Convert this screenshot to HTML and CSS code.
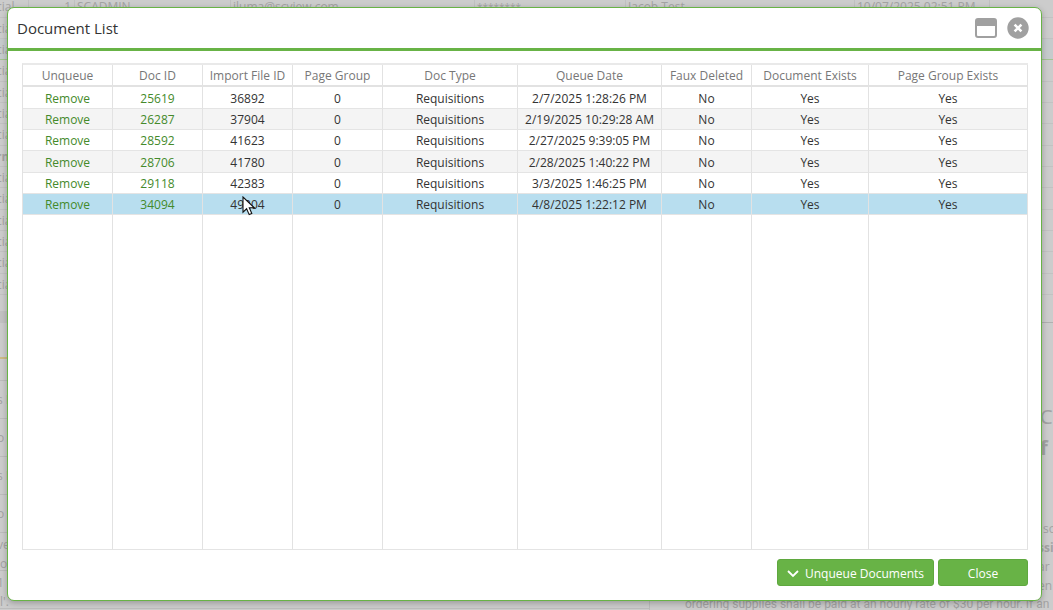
FILE: index.html
```
<!DOCTYPE html>
<html lang="en">
<head>
  <meta charset="UTF-8">
  <meta name="viewport" content="width=device-width, initial-scale=1.0">
  <title>Document List</title>
  <link rel="stylesheet" href="styles.css">
</head>
<body>
  <div class="page" aria-hidden="true">
    <div class="users">
      <div class="user"><span class="cell">cial</span><span class="cell num">1</span><span class="cell name">SCADMIN</span><span class="cell email">jluma@scview.com</span><span class="cell pass">********</span><span class="cell full">Jacob Test</span><span class="cell date">10/07/2025 02:51 PM</span><span class="cell last"></span></div>
      <div class="user"><span>cial</span></div>
      <div class="user current"><span>cial</span></div>
      <div class="user"><span>cial</span></div>
      <div class="user"><span>cial</span></div>
      <div class="user"><span>cial</span></div>
      <div class="user"><span>cial</span></div>
      <div class="user group"><span>rm</span></div>
      <div class="user"><span>cial</span></div>
      <div class="user"><span>cial</span></div>
      <div class="user"><span>cial</span></div>
      <div class="user"><span>cial</span></div>
      <div class="user"><span>cial</span></div>
      <div class="user"><span>cial</span></div>
    </div>
    <div class="lower">
      <div class="notes">
        <div class="notes-bar"></div>
        <div class="notes-tab"></div>
        <div class="note short"></div>
        <div class="note">s I</div>
        <div class="note">o</div>
        <div class="note">s I</div>
        <div class="note">o</div>
        <div class="note">ve<br>o</div>
        <div class="note">1 1<br>l'.</div>
      </div>
      <div class="article">
        <div class="article-bar"></div>
        <div class="article-title">C</div>
        <div class="article-title strong">f I</div>
        <p class="tail first">so</p>
        <p class="tail strong">ssi</p>
        <p class="tail">ar b</p>
        <p class="tail">en</p>
        <p class="rate">ordering supplies shall be paid at an hourly rate of $30 per hour. If an</p>
      </div>
    </div>
  </div>

  <div class="dialog" role="dialog" aria-labelledby="dialog-title">
    <div class="dialog-header">
      <h1 id="dialog-title">Document List</h1>
      <button class="icon-btn" type="button" aria-label="Maximize">
        <svg width="22" height="20" viewBox="0 0 22 20">
          <rect x="1" y="1" width="20" height="18" rx="2" fill="#fff" stroke="#a0a0a0" stroke-width="2"/>
          <path d="M1 2h20v6H1z" fill="#a0a0a0"/>
        </svg>
      </button>
      <button class="icon-btn" type="button" aria-label="Close dialog">
        <svg width="22" height="22" viewBox="0 0 22 22">
          <circle cx="11" cy="11" r="10.7" fill="#a0a0a0"/>
          <path d="M7.6 7.6l6.8 6.8M14.4 7.6l-6.8 6.8" stroke="#fff" stroke-width="2.6"/>
        </svg>
      </button>
    </div>

    <div class="dialog-body">
      <table class="docs">
        <colgroup>
          <col class="c-first"><col class="c-small"><col class="c-small"><col class="c-small">
          <col class="c-type"><col class="c-date"><col class="c-small"><col class="c-exists"><col>
        </colgroup>
        <thead>
          <tr>
            <th>Unqueue</th><th>Doc ID</th><th>Import File ID</th><th>Page Group</th><th>Doc Type</th><th>Queue Date</th><th>Faux Deleted</th><th>Document Exists</th><th>Page Group Exists</th>
          </tr>
        </thead>
        <tbody>
          <tr><td><a href="#">Remove</a></td><td><a href="#">25619</a></td><td>36892</td><td>0</td><td>Requisitions</td><td>2/7/2025 1:28:26 PM</td><td>No</td><td>Yes</td><td>Yes</td></tr>
          <tr><td><a href="#">Remove</a></td><td><a href="#">26287</a></td><td>37904</td><td>0</td><td>Requisitions</td><td>2/19/2025 10:29:28 AM</td><td>No</td><td>Yes</td><td>Yes</td></tr>
          <tr><td><a href="#">Remove</a></td><td><a href="#">28592</a></td><td>41623</td><td>0</td><td>Requisitions</td><td>2/27/2025 9:39:05 PM</td><td>No</td><td>Yes</td><td>Yes</td></tr>
          <tr><td><a href="#">Remove</a></td><td><a href="#">28706</a></td><td>41780</td><td>0</td><td>Requisitions</td><td>2/28/2025 1:40:22 PM</td><td>No</td><td>Yes</td><td>Yes</td></tr>
          <tr><td><a href="#">Remove</a></td><td><a href="#">29118</a></td><td>42383</td><td>0</td><td>Requisitions</td><td>3/3/2025 1:46:25 PM</td><td>No</td><td>Yes</td><td>Yes</td></tr>
          <tr class="selected"><td><a href="#">Remove</a></td><td><a href="#">34094</a></td><td class="pointed">49204
            <svg class="cursor" width="14" height="20" viewBox="0 0 14 20"><path d="M1 1v15.2l3.6-3.4 2.6 5.8 2.6-1.1-2.5-5.7h5z" fill="#fff" stroke="#111" stroke-width="1.1"/></svg>
          </td><td>0</td><td>Requisitions</td><td>4/8/2025 1:22:12 PM</td><td>No</td><td>Yes</td><td>Yes</td></tr>
          <tr class="filler"><td></td><td></td><td></td><td></td><td></td><td></td><td></td><td></td><td></td></tr>
        </tbody>
      </table>
    </div>

    <div class="dialog-footer">
      <button class="btn btn-wide" type="button">
        <svg width="12" height="8" viewBox="0 0 12 8"><path d="M1 1l5 5 5-5" fill="none" stroke="#fff" stroke-width="1.8"/></svg>
        Unqueue Documents
      </button>
      <button class="btn" type="button">Close</button>
    </div>
  </div>
</body>
</html>
```
FILE: styles.css
```
* {
  box-sizing: border-box;
}

html, body {
  height: 100%;
}

body {
  margin: 0;
  overflow: hidden;
  background: #cccccc;
  font-family: "Open Sans", "Noto Sans", sans-serif;
  font-size: 12px;
  color: #333;
}

/* page behind the dialog */
.page {
  height: 100%;
  overflow: hidden;
  color: #a3a3a3;
  white-space: nowrap;
}

.users {
  margin-top: -4px;
}

.user {
  display: flex;
  height: 21px;
  line-height: 22px;
  border-bottom: 1px solid #c2c2c2;
  text-indent: -4px;
}

.user:nth-child(3n+1) {
  height: 22px;
}

.user.current {
  background: #c5cbcc;
  border-bottom-color: #a2c48f;
}

.user.group {
  font-weight: bold;
}

.cell {
  width: 29px;
  border-right: 1px solid #c0c0c0;
}

.cell + .cell {
  text-indent: 0;
  padding-left: 2px;
}

.cell.num { width: 46px; text-align: right; padding-right: 3px; }
.cell.name { width: 156px; }
.cell.email { width: 244px; }
.cell.pass { width: 151px; font-size: 10px; }
.cell.full { width: 229px; }
.cell.date { width: 135px; }
.cell.last { flex: 1; border-right: 0; }

.lower {
  display: flex;
}

.notes {
  width: 650px;
  border-right: 1px solid #bbb;
}

.notes-bar {
  height: 28px;
  border-bottom: 12px solid #c2c2c2;
}

.notes-tab {
  height: 36px;
  border-bottom: 2px solid #cdbb84;
}

.note {
  height: 38px;
  padding-top: 9px;
  line-height: 19px;
  border-bottom: 1px solid #bcbcbc;
  text-indent: -3px;
}

.note.short {
  height: 22px;
}

.note:nth-child(n+8) {
  padding-top: 2px;
}

.article {
  flex: 1;
  padding-left: 35px;
  overflow: hidden;
}

.article-bar {
  height: 28px;
  margin: 0 0 80px -35px;
  border-bottom: 1px solid #b0b0b0;
}

.article-title {
  height: 31px;
  padding-left: 355px;
  font-size: 20px;
  line-height: 28px;
}

.article p {
  margin: 0;
  line-height: 19px;
}

.article .tail {
  padding-left: 353px;
}

.article .first {
  margin-top: 54px;
  padding-left: 358px;
}

.article .rate {
  font-family: Roboto, sans-serif;
}

.strong {
  font-weight: bold;
}

/* dialog */
.dialog {
  position: absolute;
  inset: 7px 11px 9px 7px;
  display: flex;
  flex-direction: column;
  background: #fff;
  border: 1px solid #68b346;
  border-radius: 7px;
  box-shadow: 0 2px 6px rgba(0, 0, 0, 0.25);
}

.dialog-header {
  display: flex;
  align-items: center;
  gap: 10px;
  height: 43px;
  padding: 0 12px 0 9px;
  border-bottom: 3px solid #68b346;
}

.dialog-header h1 {
  flex: 1;
  margin: 0;
  font-size: 15px;
  font-weight: normal;
}

.icon-btn {
  display: flex;
  padding: 0;
  border: 0;
  background: none;
  cursor: pointer;
}

.dialog-body {
  flex: 1;
  min-height: 0;
  padding: 12px 13px 0 14px;
}

.docs {
  width: 100%;
  height: 100%;
  table-layout: fixed;
  border-spacing: 0;
  border-top: 2px solid #e9e9e9;
  border-left: 1px solid #e2e2e2;
  text-align: center;
  white-space: nowrap;
}

.c-first { width: 90px; }
.c-small { width: 90px; }
.c-type { width: 135px; }
.c-date { width: 144px; }
.c-exists { width: 117px; }

.docs th,
.docs td {
  padding: 2px 0 0;
  line-height: 18px;
  border-right: 1px solid #e2e2e2;
  border-bottom: 1px solid #e4e4e4;
}

.docs th {
  height: 22px;
  font-weight: normal;
  color: #777;
  border-bottom: 2px solid #e2e2e2;
}

.docs td {
  height: 21px;
}

.docs tr:nth-child(3n+1) td {
  height: 22px;
}

.docs tbody tr:nth-child(even) {
  background: #f4f4f4;
}

.docs tbody tr.selected:nth-child(n) {
  background: #b8deef;
}

.docs tbody tr.filler:nth-child(n) td {
  height: auto;
}

.docs a {
  color: #448a2a;
  text-decoration: none;
}

.pointed {
  position: relative;
}

.cursor {
  position: absolute;
  left: 39px;
  top: 2px;
}

.dialog-footer {
  display: flex;
  justify-content: flex-end;
  gap: 4px;
  padding: 9px 13px 14px;
}

.btn {
  display: flex;
  align-items: center;
  justify-content: center;
  gap: 6px;
  width: 90px;
  height: 27px;
  padding: 2px 0 0;
  border: 1px solid #5fa83f;
  border-radius: 3px;
  background: #68b346;
  color: #fff;
  font-family: inherit;
  font-size: 12px;
  cursor: pointer;
}

.btn-wide {
  width: 157px;
}
```
